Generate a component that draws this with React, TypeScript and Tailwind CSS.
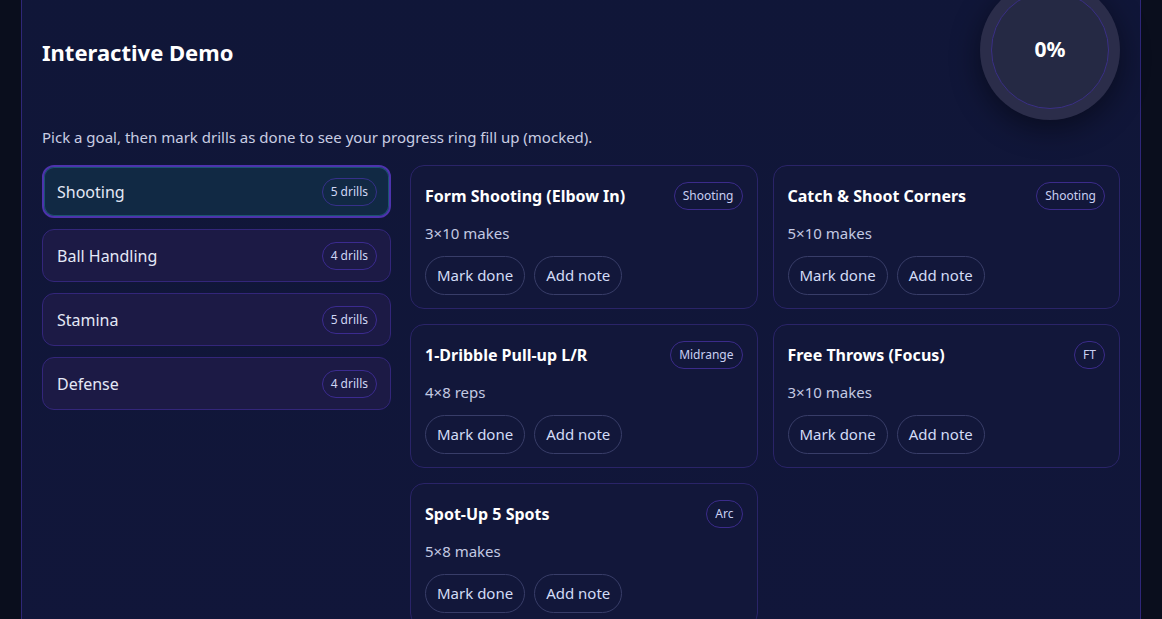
const goals = [
  { name: "Shooting", count: 5 },
  { name: "Ball Handling", count: 4 },
  { name: "Stamina", count: 5 },
  { name: "Defense", count: 4 },
];

const drills = [
  { title: "Form Shooting (Elbow In)", tag: "Shooting", reps: "3×10 makes" },
  { title: "Catch & Shoot Corners", tag: "Shooting", reps: "5×10 makes" },
  { title: "1-Dribble Pull-up L/R", tag: "Midrange", reps: "4×8 reps" },
  { title: "Free Throws (Focus)", tag: "FT", reps: "3×10 makes" },
  { title: "Spot-Up 5 Spots", tag: "Arc", reps: "5×8 makes" },
];

function DrillCard({ title, tag, reps }: { title: string; tag: string; reps: string }) {
  return (
    <div className="rounded-[14px] border border-[#2a2468] bg-[#12173a] px-[14px] pt-4 pb-[13px]">
      <div className="flex items-center justify-between h-[28px]">
        <h3 className="text-[16px] font-bold text-white">{title}</h3>
        <span className="rounded-full border border-[#3b2b8a] px-[8px] h-[28px] leading-[26px] text-[12px] text-[#c9cff2]">
          {tag}
        </span>
      </div>
      <p className="mt-[12px] text-[15px] leading-[22px] text-[#c3c9e2]">{reps}</p>
      <div className="mt-[12px] flex gap-[9px]">
        <button className="h-[39px] rounded-full border border-[#383d68] px-[11px] text-[15px] text-[#d3dcf6]">
          Mark done
        </button>
        <button className="h-[39px] rounded-full border border-[#383d68] px-[11px] text-[15px] text-[#d3dcf6]">
          Add note
        </button>
      </div>
    </div>
  );
}

export default function App() {
  return (
    <div
      className="h-[619px] overflow-hidden bg-[#0a0e1d] px-[21px]"
      style={{ fontFamily: '"Noto Sans", "Open Sans", sans-serif' }}
    >
      <section className="-mt-[20px] min-h-[700px] border-x border-[#2f2778] bg-gradient-to-b from-[#101638] to-[#11163a] px-[20px]">
        {/* header */}
        <div className="flex items-center justify-between">
          <h2 className="mt-[4px] text-[22px] font-bold text-white">Interactive Demo</h2>
          <div className="flex h-[140px] w-[140px] items-center justify-center rounded-full bg-[#2b2d4a] shadow-[0_8px_30px_rgba(0,0,0,0.45)]">
            <div className="flex h-[118px] w-[118px] items-center justify-center rounded-full border border-[#3a2f85] bg-[#252944]">
              <span className="text-[21px] font-bold text-white">0%</span>
            </div>
          </div>
        </div>

        <p className="mt-[6px] text-[15px] leading-[22px] text-[#c9cde3]">
          Pick a goal, then mark drills as done to see your progress ring fill up (mocked).
        </p>

        <div className="mt-[17px] grid grid-cols-[349px_1fr] gap-[19px]">
          {/* goals */}
          <div className="flex flex-col gap-[11px]">
            {goals.map((g, i) =>
              i === 0 ? (
                <div
                  key={g.name}
                  className="flex h-[53px] items-center justify-between rounded-[12px] border-2 border-[#4d33ad] bg-[#112944] pl-[13px] pr-[12px] shadow-[inset_0_0_0_1px_#1b5470]"
                >
                  <span className="text-[16px] text-[#e4e8f6]">{g.name}</span>
                  <span className="rounded-full border border-[#36308a] px-[8px] h-[28px] leading-[26px] text-[12px] text-[#d0d6f4]">
                    {g.count} drills
                  </span>
                </div>
              ) : (
                <div
                  key={g.name}
                  className="flex h-[53px] items-center justify-between rounded-[12px] border border-[#33267a] bg-[#1c1a45] pl-[14px] pr-[13px]"
                >
                  <span className="text-[16px] text-[#e4e8f6]">{g.name}</span>
                  <span className="rounded-full border border-[#3b2b8f] px-[8px] h-[28px] leading-[26px] text-[12px] text-[#d0d6f4]">
                    {g.count} drills
                  </span>
                </div>
              )
            )}
          </div>

          {/* drills */}
          <div className="grid grid-cols-2 gap-[15px] content-start">
            {drills.map((d) => (
              <DrillCard key={d.title} {...d} />
            ))}
          </div>
        </div>
      </section>
    </div>
  );
}
